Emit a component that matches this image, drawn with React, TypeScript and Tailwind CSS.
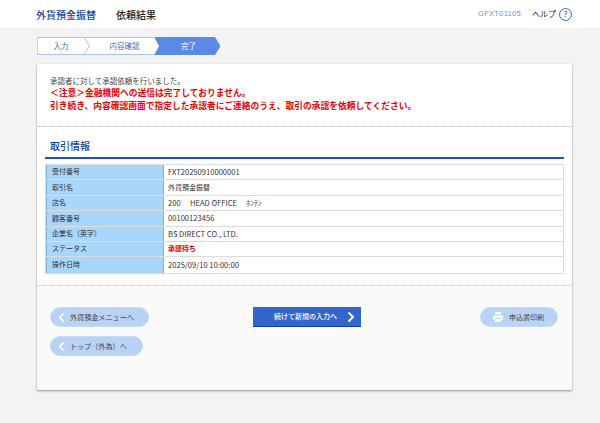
import { ChevronLeft, ChevronRight } from "lucide-react";

const font = { fontFamily: '"Noto Sans CJK JP", "Noto Sans", sans-serif' };

const rows = [
  { label: "受付番号", value: "FXT20250910000001", size: "text-[7.6px]" },
  { label: "取引名", value: "外貨預金振替", size: "text-[7px]" },
  { label: "店名", value: "200　 HEAD OFFICE　 ﾎﾝﾃﾝ", size: "text-[7.6px]" },
  { label: "顧客番号", value: "00100123456", size: "text-[7.6px]" },
  { label: "企業名（英字）", value: "BS DIRECT CO., LTD.", size: "text-[7.6px]" },
  { label: "ステータス", value: "承認待ち", size: "text-[7px]", alert: true },
  { label: "操作日時", value: "2025/09/10 10:00:00", size: "text-[7.6px]" },
];

const BackButton = ({ label, width }: { label: string; width: string }) => (
  <button className={`flex items-center h-[20px] ${width} rounded-full bg-[#b9d3f5] border border-[#c5dbf8] text-[#444] text-[7.1px] pl-[3px]`}>
    <ChevronLeft className="w-[15px] h-[15px] text-white mr-[1px]" strokeWidth={2.6} />
    {label}
  </button>
);

const Step = ({ label, width, active, first, textClass }: { label: string; width: string; active?: boolean; first?: boolean; textClass?: string }) => (
  <div className={`relative h-[18px] ${width} ${first ? "" : "-ml-[7px]"} flex items-center justify-center text-[7.5px] ${active ? "text-white" : "text-[#4a6fb5]"}`}>
    <svg className="absolute inset-0 w-full h-full" viewBox="0 0 100 18" preserveAspectRatio="none">
      <path
        d={first ? "M0.5 0.5H92L100 9L92 17.5H0.5Z" : "M0 0.5H92L100 9L92 17.5H0L7 9Z"}
        fill={active ? "#5a8ae6" : "#ffffff"}
        stroke={active ? "#5a8ae6" : "#a9c3ef"}
        vectorEffect="non-scaling-stroke"
      />
    </svg>
    <span className={`relative ${textClass ?? ""}`}>{label}</span>
  </div>
);

export default function App() {
  return (
    <div className="w-[600px] h-[423px] overflow-hidden bg-[#f3f3f3] flex flex-col" style={font}>
      {/* Header */}
      <div className="h-[29px] bg-white flex items-center justify-between pl-[36px] pr-[28px] shrink-0 border-b border-[#efefef]">
        <div className="flex items-center gap-[20px] font-medium text-[10px]">
          <span className="text-[#0f3f9e]">外貨預金振替</span>
          <span className="text-[#222]">依頼結果</span>
        </div>
        <div className="flex items-center">
          <span className="text-[7.5px] text-[#6b93e6] tracking-[0.3px] mr-[11px]" style={{ fontFamily: '"Liberation Sans", sans-serif' }}>GFXT01105</span>
          <span className="text-[8px] text-[#222] mr-[3px]">ヘルプ</span>
          <span className="w-[13px] h-[13px] rounded-full border-[1.5px] border-[#2f6fd8] text-[#2f6fd8] text-[8px] font-medium flex items-center justify-center">?</span>
        </div>
      </div>

      <div className="pl-[37px] pt-[8px]">
        {/* Steps */}
        <div className="flex">
          <Step label="入力" width="w-[54px]" first textClass="-ml-[6px]" />
          <Step label="内容確認" width="w-[78px]" textClass="ml-[3px]" />
          <Step label="完了" width="w-[65px]" active textClass="ml-[2px]" />
        </div>

        {/* Card */}
        <div className="mt-[9px] w-[535px] h-[326px] bg-white shadow-[0_1px_2px_rgba(0,0,0,0.4)] flex flex-col">
          <div className="h-[63px] pl-[13px] pt-[12px] border-b border-dotted border-[#bdbdbd] shrink-0">
            <p className="text-[7.5px] text-[#444] leading-[10px]">承認者に対して承認依頼を行いました。</p>
            <p className="text-[8.75px] text-[#f00000] font-bold leading-[13px]">＜注意＞金融機関への送信は完了しておりません。</p>
            <p className="text-[8.75px] text-[#f00000] font-bold leading-[13px]">引き続き、内容確認画面で指定した承認者にご連絡のうえ、取引の承認を依頼してください。</p>
          </div>

          <div className="h-[159px] px-[8px] pt-[10px] border-b border-dotted border-[#bdbdbd] shrink-0">
            <h2 className="text-[10px] font-medium text-[#0f3f9e] pl-[5px] h-[22px] leading-[18px] border-b-2 border-[#1c52b8]">取引情報</h2>
            <div className="mt-[5px] border border-[#dcdcdc]">
              {rows.map((r) => (
                <div key={r.label} className="flex h-[15.4px] border-b border-[#dcdcdc] last:border-b-0">
                  <div className="w-[118px] bg-[#a9d6fb] border-l border-[#7fb3de] border-r pl-[5px] pb-[1px] flex items-center text-[7px] text-[#333]">{r.label}</div>
                  <div className={`flex-1 pl-[4px] pb-[1px] flex items-center ${r.size} ${r.alert ? "text-[#f00000] font-bold" : "text-[#333]"}`}>{r.value}</div>
                </div>
              ))}
            </div>
          </div>

          {/* Footer */}
          <div className="flex-1 bg-[#fafafa] flex pl-[13px] pr-[14px] pt-[21px]">
            <div className="flex flex-col gap-[9px] w-[203px]">
              <BackButton label="外貨預金メニューへ" width="w-[99px]" />
              <BackButton label="トップ（外為）へ" width="w-[93px]" />
            </div>
            <button className="relative h-[20px] w-[108px] bg-[#3366cc] border-b border-[#0f3fb0] text-white text-[7px] font-medium flex items-center justify-center pr-[3px]">
              続けて新規の入力へ
              <ChevronRight className="absolute right-[2px] w-[16px] h-[16px]" strokeWidth={2.8} />
            </button>
            <button className="ml-auto h-[20px] w-[78px] rounded-full bg-[#b9d3f5] border border-[#c5dbf8] text-[#444] text-[7px] flex items-center pl-[11px] gap-[5px]">
              <svg viewBox="0 0 12 12" className="w-[12px] h-[12px]" fill="#fff">
                <path d="M3 1h6v2.5H3z" />
                <path d="M1 4.5h10v4.5H9.5V7h-7v2H1z" />
                <path d="M3 8h6v3H3z" />
              </svg>
              申込書印刷
            </button>
          </div>
        </div>
      </div>
    </div>
  );
}
